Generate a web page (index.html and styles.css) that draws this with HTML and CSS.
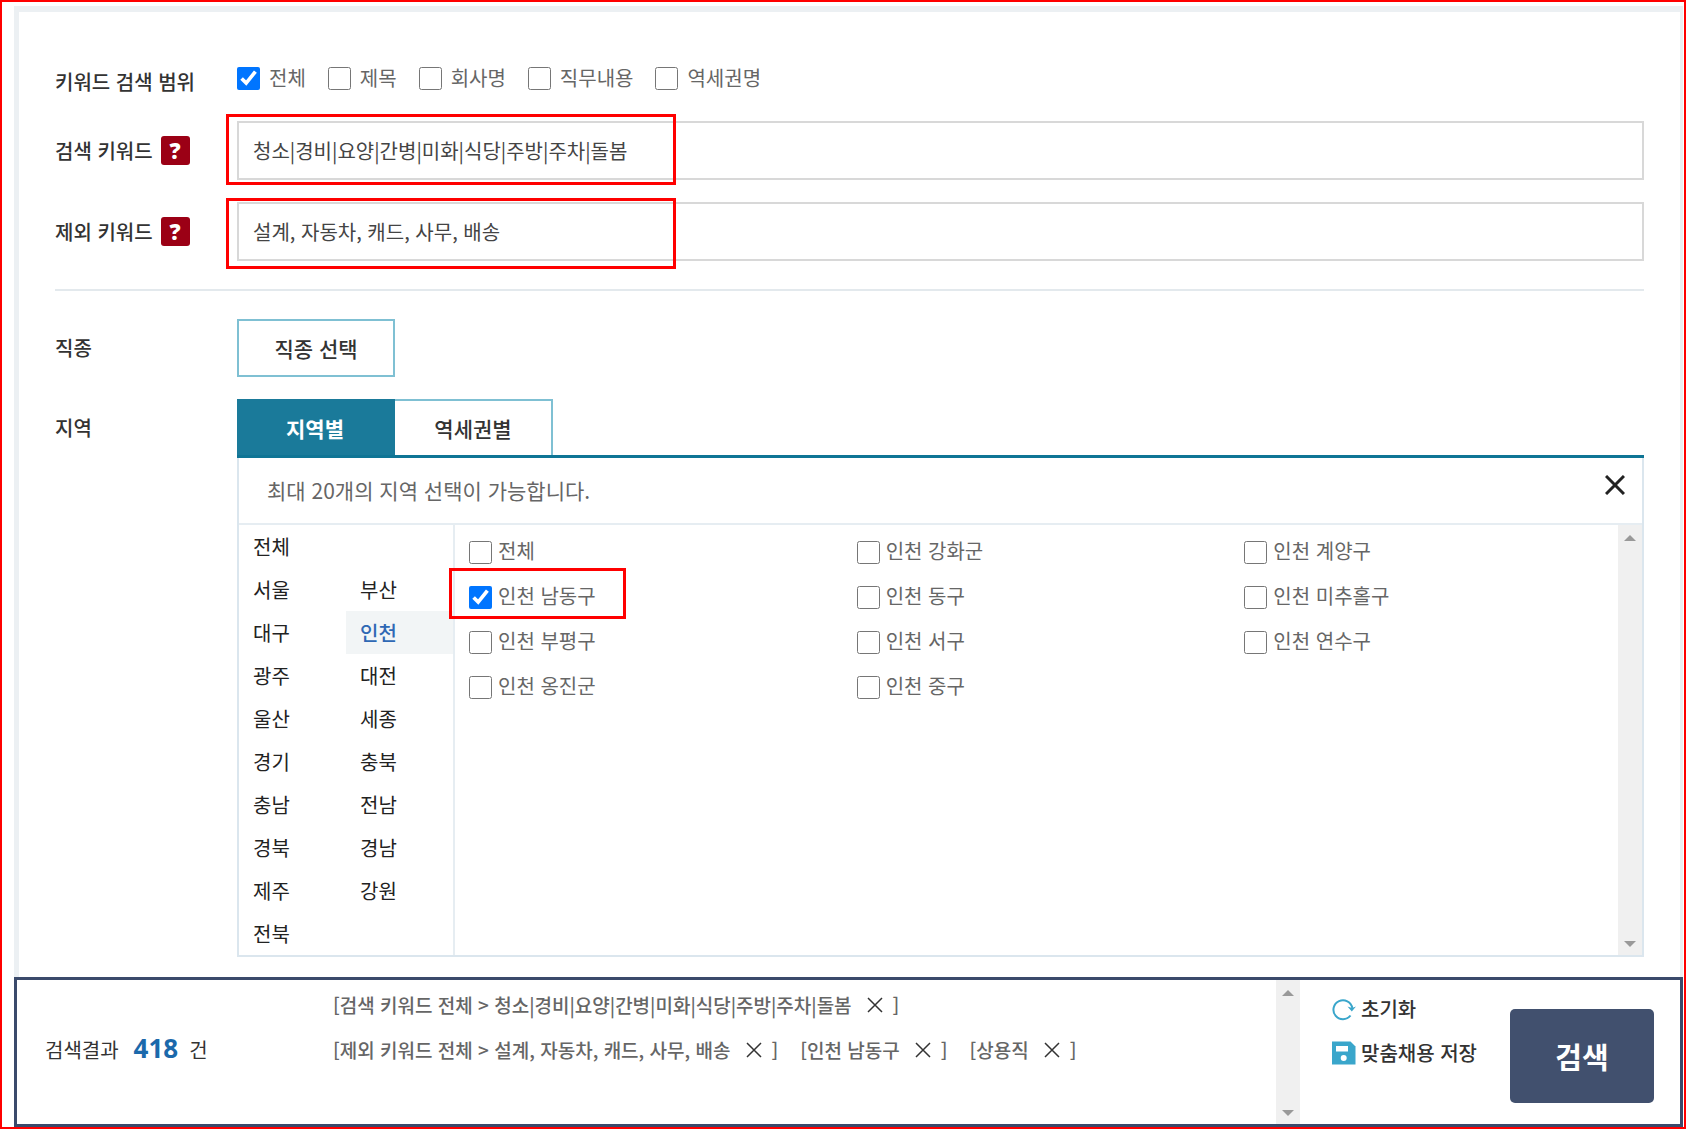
FILE: index.html
```html
<!DOCTYPE html>
<html lang="ko">
<head>
<meta charset="utf-8">
<meta name="viewport" content="width=device-width, initial-scale=1">
<title>채용정보 상세검색</title>
<link rel="stylesheet" href="styles.css">
</head>
<body>
<form class="page">
  <section class="panel">
    <div class="row row-scope">
      <span class="label" id="scope-label">키워드 검색 범위</span>
      <div class="scope" role="group" aria-labelledby="scope-label">
        <label class="check"><input type="checkbox" checked>전체</label>
        <label class="check"><input type="checkbox">제목</label>
        <label class="check"><input type="checkbox">회사명</label>
        <label class="check"><input type="checkbox">직무내용</label>
        <label class="check"><input type="checkbox">역세권명</label>
      </div>
    </div>
    <div class="row">
      <div class="label label-help"><label for="keyword">검색 키워드</label><button type="button" class="help" aria-label="검색 키워드 도움말">?</button></div>
      <div class="field">
        <input class="text-input" id="keyword" type="text" value="청소|경비|요양|간병|미화|식당|주방|주차|돌봄">
        <span class="mark mark-keyword"></span>
      </div>
    </div>
    <div class="row">
      <div class="label label-help"><label for="exclude">제외 키워드</label><button type="button" class="help" aria-label="제외 키워드 도움말">?</button></div>
      <div class="field">
        <input class="text-input" id="exclude" type="text" value="설계, 자동차, 캐드, 사무, 배송">
        <span class="mark mark-exclude"></span>
      </div>
    </div>
    <hr class="divider">
    <div class="row">
      <span class="label">직종</span>
      <div><button type="button" class="box-button">직종 선택</button></div>
    </div>
    <div class="row row-region">
      <span class="label label-tab">지역</span>
      <div class="region">
        <div class="tabs">
          <button type="button" class="tab tab-active">지역별</button>
          <button type="button" class="tab">역세권별</button>
        </div>
        <div class="region-box">
          <div class="notice">
            <span>최대 20개의 지역 선택이 가능합니다.</span>
            <button type="button" class="close" aria-label="닫기">
              <svg width="20" height="20" viewBox="0 0 20 20"><path d="M1 1L19 19M19 1L1 19" stroke="#222" stroke-width="3" fill="none"/></svg>
            </button>
          </div>
          <div class="region-body">
            <nav class="cities">
              <a href="#" class="city city-all">전체</a>
              <a href="#" class="city">서울</a><a href="#" class="city">부산</a>
              <a href="#" class="city">대구</a><a href="#" class="city city-on">인천</a>
              <a href="#" class="city">광주</a><a href="#" class="city">대전</a>
              <a href="#" class="city">울산</a><a href="#" class="city">세종</a>
              <a href="#" class="city">경기</a><a href="#" class="city">충북</a>
              <a href="#" class="city">충남</a><a href="#" class="city">전남</a>
              <a href="#" class="city">경북</a><a href="#" class="city">경남</a>
              <a href="#" class="city">제주</a><a href="#" class="city">강원</a>
              <a href="#" class="city">전북</a>
            </nav>
            <div class="districts">
              <label class="district"><input type="checkbox"><span>전체</span></label>
              <label class="district"><input type="checkbox"><span>인천 강화군</span></label>
              <label class="district"><input type="checkbox"><span>인천 계양구</span></label>
              <label class="district"><input type="checkbox" checked><span>인천 남동구</span><i class="mark mark-district"></i></label>
              <label class="district"><input type="checkbox"><span>인천 동구</span></label>
              <label class="district"><input type="checkbox"><span>인천 미추홀구</span></label>
              <label class="district"><input type="checkbox"><span>인천 부평구</span></label>
              <label class="district"><input type="checkbox"><span>인천 서구</span></label>
              <label class="district"><input type="checkbox"><span>인천 연수구</span></label>
              <label class="district"><input type="checkbox"><span>인천 옹진군</span></label>
              <label class="district"><input type="checkbox"><span>인천 중구</span></label>
            </div>
            <div class="scrollbar" aria-hidden="true"><i class="arrow arrow-up"></i><i class="arrow arrow-down"></i></div>
          </div>
        </div>
      </div>
    </div>
  </section>

  <section class="result">
    <p class="count"><span>검색결과</span><strong>418</strong><span>건</span></p>
    <div class="tags">
      <div class="tag-line">
        <span class="tag">[검색 키워드 전체 &gt; 청소|경비|요양|간병|미화|식당|주방|주차|돌봄<button type="button" class="remove" aria-label="삭제"><svg width="16" height="16" viewBox="0 0 16 16"><path d="M1 1L15 15M15 1L1 15" stroke="#333" stroke-width="1.5" fill="none"/></svg></button>]</span>
      </div>
      <div class="tag-line">
        <span class="tag">[제외 키워드 전체 &gt; 설계, 자동차, 캐드, 사무, 배송<button type="button" class="remove" aria-label="삭제"><svg width="16" height="16" viewBox="0 0 16 16"><path d="M1 1L15 15M15 1L1 15" stroke="#333" stroke-width="1.5" fill="none"/></svg></button>]</span>
        <span class="tag">[인천 남동구<button type="button" class="remove" aria-label="삭제"><svg width="16" height="16" viewBox="0 0 16 16"><path d="M1 1L15 15M15 1L1 15" stroke="#333" stroke-width="1.5" fill="none"/></svg></button>]</span>
        <span class="tag">[상용직<button type="button" class="remove" aria-label="삭제"><svg width="16" height="16" viewBox="0 0 16 16"><path d="M1 1L15 15M15 1L1 15" stroke="#333" stroke-width="1.5" fill="none"/></svg></button>]</span>
      </div>
    </div>
    <div class="scrollbar" aria-hidden="true"><i class="arrow arrow-up"></i><i class="arrow arrow-down"></i></div>
    <div class="actions">
      <button type="button" class="action">
        <svg width="24" height="24" viewBox="0 0 24 24"><path d="M18.500 18.500A9.500 9.500 0 1 1 20.300 11" stroke="#3aa6cb" stroke-width="2" fill="none"/><path d="M15.500 9.500L20 11L24 9.500L19.800 14.500Z" fill="#3aa6cb"/></svg>초기화
      </button>
      <button type="button" class="action">
        <svg width="24" height="24" viewBox="0 0 24 24"><path d="M0 0.500H18.500L23.500 5.500V23.500H0Z" fill="#3aa6cb"/><path d="M4 5H16V10.500H4Z" fill="#fff"/><circle cx="11.700" cy="17" r="3" fill="#fff"/></svg>맞춤채용 저장
      </button>
    </div>
    <button type="submit" class="search">검색</button>
  </section>
</form>
</body>
</html>
```

FILE: styles.css
```css
* {
  box-sizing: border-box;
}

body {
  margin: 0;
  background: #fff;
  color: #333;
  font-family: "Noto Sans CJK KR", "Noto Sans", sans-serif;
  font-size: 20px;
  line-height: 30px;
}

button,
input {
  font: inherit;
  color: inherit;
}

button {
  padding: 0;
  border: 0;
  background: none;
  cursor: pointer;
}

input[type="checkbox"] {
  flex: none;
  width: 23px;
  height: 23px;
  margin: 0;
  accent-color: #0075ff;
}

svg {
  display: block;
  flex: none;
}

.page {
  display: flex;
  flex-direction: column;
  min-height: 100vh;
  padding: 4px 1px 0 12px;
  border: 2px solid #f00;
}

/* search conditions */
.panel {
  padding: 51px 36px 20px;
  border: solid #ecf0f3;
  border-width: 6px 3px 0 5px;
}

.row {
  display: grid;
  grid-template-columns: 182px minmax(0, 1fr);
  align-items: center;
  margin-bottom: 22px;
}

.row-scope {
  align-items: start;
}

.row-scope .label {
  padding: 4px 0 2px;
}

.row-region {
  align-items: start;
  margin: 0;
}

.label {
  font-weight: 500;
}

.label-help {
  display: flex;
  align-items: center;
  gap: 8px;
}

.label-tab {
  line-height: 58px;
}

.help {
  width: 29px;
  height: 29px;
  border-radius: 3px;
  background: #9b0015;
  color: #fff;
  font-family: "Open Sans", sans-serif;
  font-size: 22px;
  font-weight: 800;
  line-height: 29px;
}

.scope {
  display: flex;
  flex-wrap: wrap;
  gap: 22px;
  color: #666;
}

.check {
  display: flex;
  align-items: center;
  gap: 9px;
}

.field {
  position: relative;
}

.text-input {
  display: block;
  width: 100%;
  height: 59px;
  padding: 0 14px;
  border: 2px solid #d8d8d8;
  background: #fff;
  color: #444;
}

.mark {
  position: absolute;
  border: 3px solid #f00;
  pointer-events: none;
}

.mark-keyword {
  top: -7px;
  left: -11px;
  width: 450px;
  height: 71px;
}

.mark-exclude {
  top: -4px;
  left: -11px;
  width: 450px;
  height: 71px;
}

.mark-district {
  top: -13px;
  left: -6px;
  width: 177px;
  height: 51px;
}

.divider {
  height: 2px;
  margin: 28px 0;
  border: 0;
  background: #e3e9ed;
}

.box-button {
  display: block;
  width: 158px;
  height: 58px;
  border: 2px solid #7fc0d3;
  background: #fff;
  font-size: 21px;
  font-weight: 500;
}

.tabs {
  display: flex;
  border-bottom: 3px solid #0f7595;
}

.tab {
  width: 158px;
  height: 56px;
  border: 2px solid #7fc0d3;
  border-width: 2px 2px 0 0;
  background: #fff;
  font-size: 21px;
  font-weight: 500;
}

.tab-active {
  border-color: #1a7a9a;
  background: #1a7a9a;
  color: #fff;
  font-weight: 700;
}

.region-box {
  border: 2px solid #dbe6ee;
  border-top: 0;
}

.notice {
  display: flex;
  justify-content: space-between;
  align-items: flex-start;
  padding: 17px 17px 18px 28px;
  border-bottom: 2px solid #e6edf2;
  color: #666;
  font-size: 21px;
}

.close {
  width: 20px;
  height: 20px;
}

.region-body {
  display: flex;
}

.cities {
  display: grid;
  flex: none;
  grid-template-columns: 107px 107px;
  grid-auto-rows: 43px;
  border-right: 2px solid #e6edf2;
}

.city {
  padding-left: 14px;
  color: #222;
  line-height: 43px;
  text-decoration: none;
}

.city-all {
  grid-column: 1 / -1;
}

.city-on {
  background: #f2f5f6;
  color: #2f68b4;
  font-weight: 500;
}

.districts {
  display: grid;
  flex: 1;
  grid-template-columns: repeat(3, minmax(0, 1fr));
  grid-auto-rows: 30px;
  row-gap: 15px;
  padding-top: 11px;
  color: #666;
}

.district {
  position: relative;
  display: flex;
  gap: 6px;
  padding-left: 14px;
}

.district input {
  margin-top: 5px;
}

/* drawn scroll tracks */
.scrollbar {
  display: flex;
  flex: none;
  flex-direction: column;
  justify-content: space-between;
  align-items: center;
  width: 24px;
  padding: 10px 0 8px;
  background: #f0f0f0;
}

.arrow {
  border: solid transparent;
  border-width: 0 6px;
}

.arrow-up {
  border-bottom: 6px solid #999;
}

.arrow-down {
  border-top: 6px solid #999;
}

/* result bar */
.result {
  display: flex;
  flex: 1;
  align-items: center;
  min-height: 149px;
  padding-right: 26px;
  border: 3px solid #3b4a6b;
}

.count {
  display: flex;
  align-items: baseline;
  flex: none;
  gap: 11px;
  width: 288px;
  margin: 0;
  padding: 0 0 6px 28px;
}

.count strong {
  padding-left: 4px;
  color: #1b69ab;
  font-family: "Open Sans", sans-serif;
  font-size: 26px;
}

.tags {
  display: flex;
  flex: 1;
  flex-direction: column;
  align-self: flex-start;
  gap: 15px;
  padding: 10px 0 0 28px;
  color: #666;
  font-size: 19px;
  font-weight: 500;
}

.tag-line {
  display: flex;
  flex-wrap: wrap;
  gap: 22px;
}

.tag {
  display: flex;
  align-items: center;
}

.remove {
  margin: 0 10px 0 15px;
}

.result .scrollbar {
  align-self: stretch;
}

.actions {
  display: flex;
  flex-direction: column;
  align-self: flex-start;
  gap: 14px;
  width: 178px;
  margin: 14px 0 0 32px;
}

.action {
  display: flex;
  align-items: center;
  gap: 5px;
  font-weight: 500;
}

.search {
  width: 144px;
  height: 94px;
  margin-top: 8px;
  border-radius: 5px;
  background: #41506e;
  color: #fff;
  font-size: 29px;
  font-weight: 700;
}
```
